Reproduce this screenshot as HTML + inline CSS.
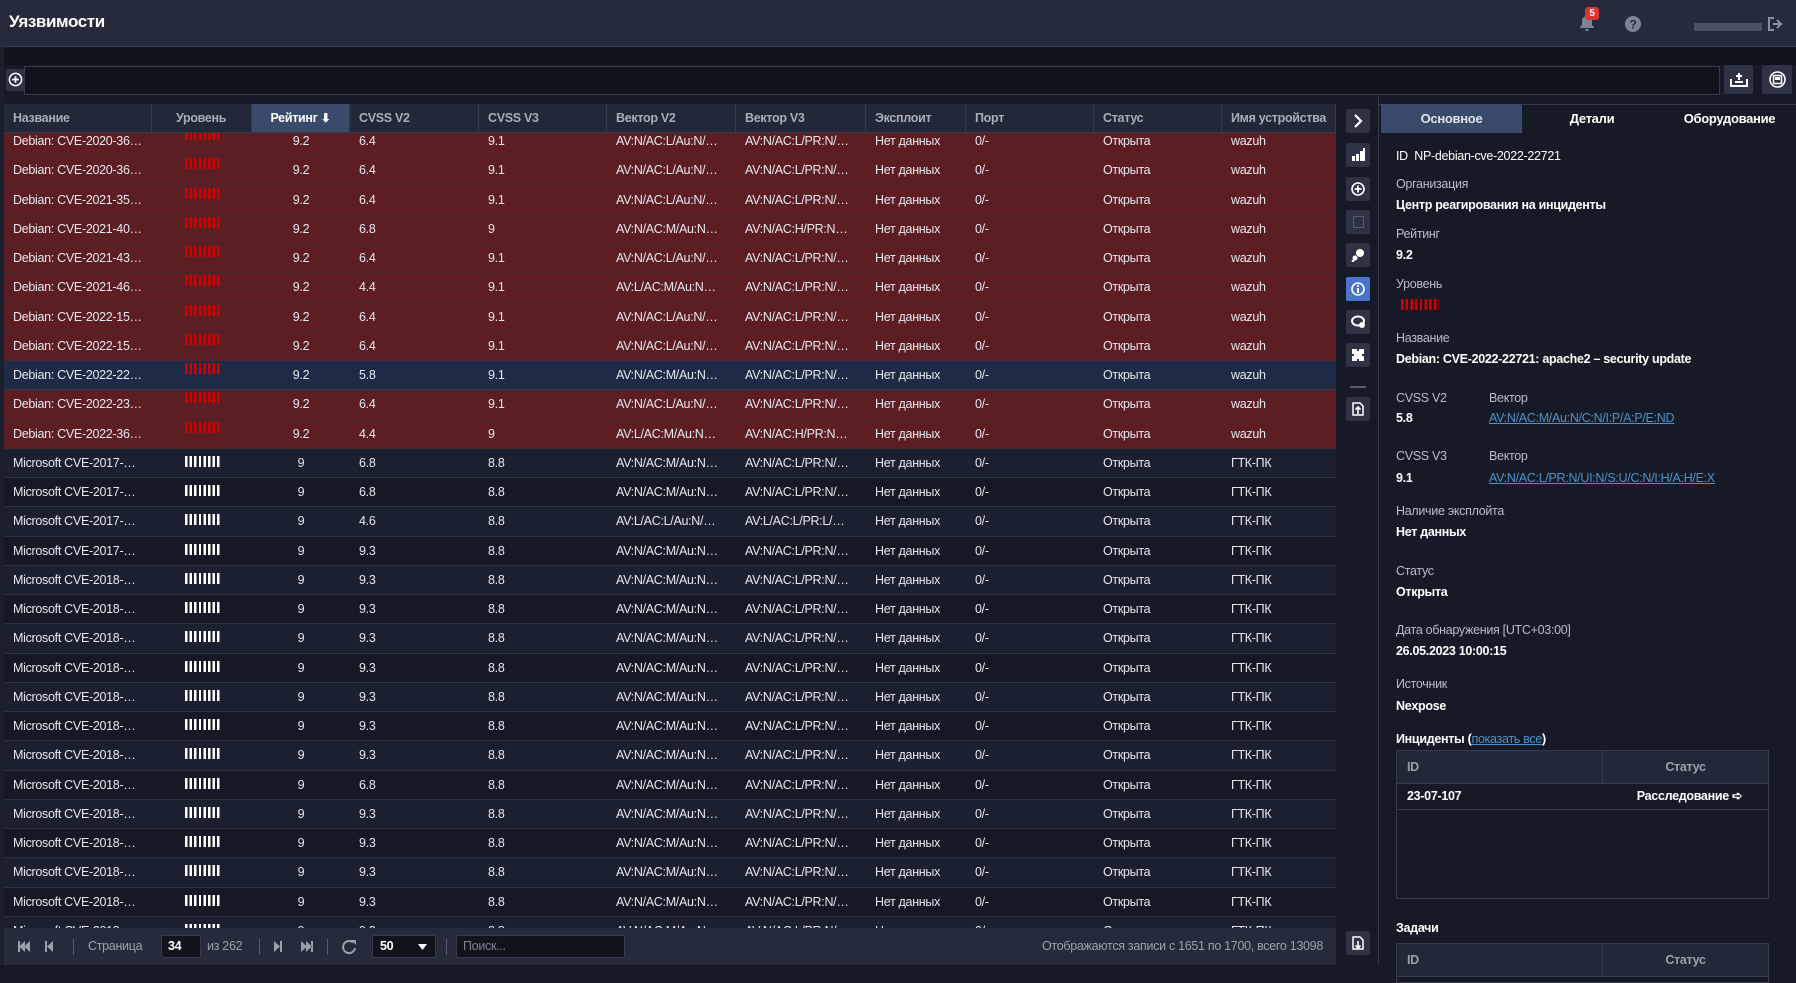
<!DOCTYPE html>
<html><head><meta charset="utf-8"><style>
*{box-sizing:border-box;margin:0;padding:0}
body{width:1796px;height:965px;overflow:hidden;background:#161a26;font-family:"Liberation Sans",sans-serif;color:#e6e8ee;position:relative;font-size:12.5px;letter-spacing:-0.3px}
.abs{position:absolute}
#top{left:0;top:0;width:1796px;height:47px;background:#262b3b;border-bottom:1px solid #333a4c}
#top .t{left:9px;top:12px;font-size:17px;font-weight:bold;color:#fff;letter-spacing:-0.4px}
#strip{left:0;top:0;width:4px;height:965px;background:#1b1f2b}
#band{left:4px;top:48px;width:1792px;height:17px;background:#10131c}
#tb{left:4px;top:65px;width:1792px;height:31px;background:#161a26}
.inp{border:1px solid #343b4d;background:#11141d}
.btn{background:#2d3344;border-radius:2px}
#grid{left:4px;top:104px;width:1332px;height:824px;overflow:hidden;background:#161a26}
.hdr{position:absolute;left:0;top:0;height:29px;width:1332px;background:#232838;display:flex;border-bottom:1px solid #333a4c;z-index:2}
.hdr div{border-right:1px solid #333a4c;color:#a8adba;font-weight:bold;line-height:29px;padding-left:9px;white-space:nowrap;overflow:hidden}
.rows{position:absolute;left:0;top:23px;width:1332px}
.r{height:29.25px;display:flex;line-height:28px;border-bottom:1px solid #2c3244;white-space:nowrap}
.r div{padding-left:9px;overflow:hidden}
.red{background:#5c1e23;border-bottom-color:#47262e}
.sel{background:#1e2a46;border-bottom-color:#2c3550}
.d1{background:#1b2030}
.d2{background:#151925}
.c1{width:148px}.c2{width:100px}.c3{width:98px;text-align:center;padding-left:0!important}.c4{width:129px}.c5{width:128px}.c6{width:129px}.c7{width:130px}.c8{width:100px}.c9{width:128px}.c10{width:128px}.c11{width:114px}
.bars{display:inline-block;width:37px;height:11px;margin-left:24px;vertical-align:0px;background:repeating-linear-gradient(90deg,#fff 0 2.4px,transparent 2.4px 4.6px)}
.red .bars,.sel .bars{background:repeating-linear-gradient(90deg,#d20000 0 2.4px,transparent 2.4px 4.6px);vertical-align:5px}
#pager{left:4px;top:928px;width:1332px;height:37px;background:#262b3b;color:#9ba0ad;font-size:12.5px}
#pager span{position:absolute;top:11px}
.sep{position:absolute;top:11px;width:1px;height:16px;background:#555c6e}
#side{left:1336px;top:96px;width:42px;height:869px;background:#161a26}
.sb{position:absolute;left:10px;width:24px;height:24px;background:#2d3344;border-radius:2px}
#panel{left:1378px;top:96px;width:418px;height:869px;background:#161a26;border-left:1px solid #333a4c}
.tab{position:absolute;top:8px;height:29px;line-height:29px;text-align:center;font-weight:bold;color:#fff;font-size:13px}
.lb{position:absolute;left:17px;color:#b9bdc8;font-size:12.5px}
.vl{position:absolute;left:17px;color:#fff;font-weight:bold;font-size:12.5px}
a{color:#4b93c9;text-decoration:underline}
.it{position:absolute;left:17px;width:373px;border:1px solid #343b4d;background:#161a26}
.ith{height:33px;background:#232838;border-bottom:1px solid #343b4d;display:flex;color:#9ba0ad;font-weight:bold}
</style></head><body>
<div id="strip" class="abs"></div>
<div id="top" class="abs"><div class="t abs">Уязвимости</div>
<svg class="abs" style="left:1578px;top:14px" width="18" height="18" viewBox="0 0 18 18"><path d="M9 2c-3 0-5 2-5 5v4l-2 2v1h14v-1l-2-2V7c0-3-2-5-5-5zM7 15a2 2 0 004 0z" fill="#7d8393"/></svg>
<div class="abs" style="left:1585px;top:7px;width:14px;height:13px;background:#e03131;border-radius:3px;color:#fff;font-size:10px;font-weight:bold;text-align:center;line-height:13px">5</div>
<svg class="abs" style="left:1625px;top:16px" width="16" height="16" viewBox="0 0 16 16"><circle cx="8" cy="8" r="8" fill="#7d8393"/><text x="8" y="12.5" text-anchor="middle" font-size="12" font-weight="bold" fill="#262b3b" font-family="Liberation Sans">?</text></svg>
<div class="abs" style="left:1694px;top:23px;width:68px;height:8px;background:#4a5061"></div>
<svg class="abs" style="left:1767px;top:16px" width="17" height="16" viewBox="0 0 17 16"><path d="M7 2H2v12h5" stroke="#8a90a0" stroke-width="2" fill="none"/><path d="M6 8h7M10 4l4 4-4 4" stroke="#8a90a0" stroke-width="2" fill="none"/></svg>
</div>
<div id="band" class="abs"></div>
<div id="tb" class="abs">
<div class="abs btn" style="left:2px;top:4px;width:18px;height:22px"></div>
<svg class="abs" style="left:4px;top:7px" width="15" height="15" viewBox="0 0 16 16"><circle cx="8" cy="8" r="6.5" stroke="#fff" stroke-width="1.6" fill="none"/><path d="M8 4.5v7M4.5 8h7" stroke="#fff" stroke-width="1.8"/></svg>
<div class="abs inp" style="left:20px;top:1px;width:1696px;height:29px"></div>
<div class="abs btn" style="left:1720px;top:0;width:29px;height:29px"></div>
<svg class="abs" style="left:1726px;top:6px" width="18" height="16" viewBox="0 0 18 16"><path d="M1 8v7h16V8" stroke="#fff" stroke-width="2" fill="none"/><path d="M5 11h8M9 2v7M6 5h6" stroke="#fff" stroke-width="2"/></svg>
<div class="abs btn" style="left:1758px;top:0;width:30px;height:29px"></div>
<svg class="abs" style="left:1765px;top:6px" width="17" height="17" viewBox="0 0 17 17"><circle cx="8.5" cy="8.5" r="7.5" stroke="#fff" stroke-width="1.6" fill="none"/><rect x="4.5" y="4.5" width="8" height="8" rx="1" stroke="#fff" stroke-width="1.6" fill="none"/><path d="M6 6h5v3H6z" fill="#fff"/></svg>
</div>

<div id="grid" class="abs">
<div class="hdr"><div class="c1">Название</div><div class="c2" style="padding-left:24px">Уровень</div><div class="c3" style="background:#3a4a6b;color:#fff">Рейтинг <span style="font-size:12px">&#x2B07;</span></div><div class="c4">CVSS V2</div><div class="c5">CVSS V3</div><div class="c6">Вектор V2</div><div class="c7">Вектор V3</div><div class="c8">Эксплоит</div><div class="c9">Порт</div><div class="c10">Статус</div><div class="c11">Имя устройства</div></div>
<div class="rows">
<div class="r red"><div class="c1">Debian: CVE-2020-36…</div><div class="c2"><span class="bars"></span></div><div class="c3">9.2</div><div class="c4">6.4</div><div class="c5">9.1</div><div class="c6">AV:N/AC:L/Au:N/…</div><div class="c7">AV:N/AC:L/PR:N/…</div><div class="c8">Нет данных</div><div class="c9">0/-</div><div class="c10">Открыта</div><div class="c11">wazuh</div></div>
<div class="r red"><div class="c1">Debian: CVE-2020-36…</div><div class="c2"><span class="bars"></span></div><div class="c3">9.2</div><div class="c4">6.4</div><div class="c5">9.1</div><div class="c6">AV:N/AC:L/Au:N/…</div><div class="c7">AV:N/AC:L/PR:N/…</div><div class="c8">Нет данных</div><div class="c9">0/-</div><div class="c10">Открыта</div><div class="c11">wazuh</div></div>
<div class="r red"><div class="c1">Debian: CVE-2021-35…</div><div class="c2"><span class="bars"></span></div><div class="c3">9.2</div><div class="c4">6.4</div><div class="c5">9.1</div><div class="c6">AV:N/AC:L/Au:N/…</div><div class="c7">AV:N/AC:L/PR:N/…</div><div class="c8">Нет данных</div><div class="c9">0/-</div><div class="c10">Открыта</div><div class="c11">wazuh</div></div>
<div class="r red"><div class="c1">Debian: CVE-2021-40…</div><div class="c2"><span class="bars"></span></div><div class="c3">9.2</div><div class="c4">6.8</div><div class="c5">9</div><div class="c6">AV:N/AC:M/Au:N…</div><div class="c7">AV:N/AC:H/PR:N…</div><div class="c8">Нет данных</div><div class="c9">0/-</div><div class="c10">Открыта</div><div class="c11">wazuh</div></div>
<div class="r red"><div class="c1">Debian: CVE-2021-43…</div><div class="c2"><span class="bars"></span></div><div class="c3">9.2</div><div class="c4">6.4</div><div class="c5">9.1</div><div class="c6">AV:N/AC:L/Au:N/…</div><div class="c7">AV:N/AC:L/PR:N/…</div><div class="c8">Нет данных</div><div class="c9">0/-</div><div class="c10">Открыта</div><div class="c11">wazuh</div></div>
<div class="r red"><div class="c1">Debian: CVE-2021-46…</div><div class="c2"><span class="bars"></span></div><div class="c3">9.2</div><div class="c4">4.4</div><div class="c5">9.1</div><div class="c6">AV:L/AC:M/Au:N…</div><div class="c7">AV:N/AC:L/PR:N/…</div><div class="c8">Нет данных</div><div class="c9">0/-</div><div class="c10">Открыта</div><div class="c11">wazuh</div></div>
<div class="r red"><div class="c1">Debian: CVE-2022-15…</div><div class="c2"><span class="bars"></span></div><div class="c3">9.2</div><div class="c4">6.4</div><div class="c5">9.1</div><div class="c6">AV:N/AC:L/Au:N/…</div><div class="c7">AV:N/AC:L/PR:N/…</div><div class="c8">Нет данных</div><div class="c9">0/-</div><div class="c10">Открыта</div><div class="c11">wazuh</div></div>
<div class="r red"><div class="c1">Debian: CVE-2022-15…</div><div class="c2"><span class="bars"></span></div><div class="c3">9.2</div><div class="c4">6.4</div><div class="c5">9.1</div><div class="c6">AV:N/AC:L/Au:N/…</div><div class="c7">AV:N/AC:L/PR:N/…</div><div class="c8">Нет данных</div><div class="c9">0/-</div><div class="c10">Открыта</div><div class="c11">wazuh</div></div>
<div class="r sel"><div class="c1">Debian: CVE-2022-22…</div><div class="c2"><span class="bars"></span></div><div class="c3">9.2</div><div class="c4">5.8</div><div class="c5">9.1</div><div class="c6">AV:N/AC:M/Au:N…</div><div class="c7">AV:N/AC:L/PR:N/…</div><div class="c8">Нет данных</div><div class="c9">0/-</div><div class="c10">Открыта</div><div class="c11">wazuh</div></div>
<div class="r red"><div class="c1">Debian: CVE-2022-23…</div><div class="c2"><span class="bars"></span></div><div class="c3">9.2</div><div class="c4">6.4</div><div class="c5">9.1</div><div class="c6">AV:N/AC:L/Au:N/…</div><div class="c7">AV:N/AC:L/PR:N/…</div><div class="c8">Нет данных</div><div class="c9">0/-</div><div class="c10">Открыта</div><div class="c11">wazuh</div></div>
<div class="r red"><div class="c1">Debian: CVE-2022-36…</div><div class="c2"><span class="bars"></span></div><div class="c3">9.2</div><div class="c4">4.4</div><div class="c5">9</div><div class="c6">AV:L/AC:M/Au:N…</div><div class="c7">AV:N/AC:H/PR:N…</div><div class="c8">Нет данных</div><div class="c9">0/-</div><div class="c10">Открыта</div><div class="c11">wazuh</div></div>
<div class="r d1"><div class="c1">Microsoft CVE-2017-…</div><div class="c2"><span class="bars"></span></div><div class="c3">9</div><div class="c4">6.8</div><div class="c5">8.8</div><div class="c6">AV:N/AC:M/Au:N…</div><div class="c7">AV:N/AC:L/PR:N/…</div><div class="c8">Нет данных</div><div class="c9">0/-</div><div class="c10">Открыта</div><div class="c11">ГТК-ПК</div></div>
<div class="r d2"><div class="c1">Microsoft CVE-2017-…</div><div class="c2"><span class="bars"></span></div><div class="c3">9</div><div class="c4">6.8</div><div class="c5">8.8</div><div class="c6">AV:N/AC:M/Au:N…</div><div class="c7">AV:N/AC:L/PR:N/…</div><div class="c8">Нет данных</div><div class="c9">0/-</div><div class="c10">Открыта</div><div class="c11">ГТК-ПК</div></div>
<div class="r d1"><div class="c1">Microsoft CVE-2017-…</div><div class="c2"><span class="bars"></span></div><div class="c3">9</div><div class="c4">4.6</div><div class="c5">8.8</div><div class="c6">AV:L/AC:L/Au:N/…</div><div class="c7">AV:L/AC:L/PR:L/…</div><div class="c8">Нет данных</div><div class="c9">0/-</div><div class="c10">Открыта</div><div class="c11">ГТК-ПК</div></div>
<div class="r d2"><div class="c1">Microsoft CVE-2017-…</div><div class="c2"><span class="bars"></span></div><div class="c3">9</div><div class="c4">9.3</div><div class="c5">8.8</div><div class="c6">AV:N/AC:M/Au:N…</div><div class="c7">AV:N/AC:L/PR:N/…</div><div class="c8">Нет данных</div><div class="c9">0/-</div><div class="c10">Открыта</div><div class="c11">ГТК-ПК</div></div>
<div class="r d1"><div class="c1">Microsoft CVE-2018-…</div><div class="c2"><span class="bars"></span></div><div class="c3">9</div><div class="c4">9.3</div><div class="c5">8.8</div><div class="c6">AV:N/AC:M/Au:N…</div><div class="c7">AV:N/AC:L/PR:N/…</div><div class="c8">Нет данных</div><div class="c9">0/-</div><div class="c10">Открыта</div><div class="c11">ГТК-ПК</div></div>
<div class="r d2"><div class="c1">Microsoft CVE-2018-…</div><div class="c2"><span class="bars"></span></div><div class="c3">9</div><div class="c4">9.3</div><div class="c5">8.8</div><div class="c6">AV:N/AC:M/Au:N…</div><div class="c7">AV:N/AC:L/PR:N/…</div><div class="c8">Нет данных</div><div class="c9">0/-</div><div class="c10">Открыта</div><div class="c11">ГТК-ПК</div></div>
<div class="r d1"><div class="c1">Microsoft CVE-2018-…</div><div class="c2"><span class="bars"></span></div><div class="c3">9</div><div class="c4">9.3</div><div class="c5">8.8</div><div class="c6">AV:N/AC:M/Au:N…</div><div class="c7">AV:N/AC:L/PR:N/…</div><div class="c8">Нет данных</div><div class="c9">0/-</div><div class="c10">Открыта</div><div class="c11">ГТК-ПК</div></div>
<div class="r d2"><div class="c1">Microsoft CVE-2018-…</div><div class="c2"><span class="bars"></span></div><div class="c3">9</div><div class="c4">9.3</div><div class="c5">8.8</div><div class="c6">AV:N/AC:M/Au:N…</div><div class="c7">AV:N/AC:L/PR:N/…</div><div class="c8">Нет данных</div><div class="c9">0/-</div><div class="c10">Открыта</div><div class="c11">ГТК-ПК</div></div>
<div class="r d1"><div class="c1">Microsoft CVE-2018-…</div><div class="c2"><span class="bars"></span></div><div class="c3">9</div><div class="c4">9.3</div><div class="c5">8.8</div><div class="c6">AV:N/AC:M/Au:N…</div><div class="c7">AV:N/AC:L/PR:N/…</div><div class="c8">Нет данных</div><div class="c9">0/-</div><div class="c10">Открыта</div><div class="c11">ГТК-ПК</div></div>
<div class="r d2"><div class="c1">Microsoft CVE-2018-…</div><div class="c2"><span class="bars"></span></div><div class="c3">9</div><div class="c4">9.3</div><div class="c5">8.8</div><div class="c6">AV:N/AC:M/Au:N…</div><div class="c7">AV:N/AC:L/PR:N/…</div><div class="c8">Нет данных</div><div class="c9">0/-</div><div class="c10">Открыта</div><div class="c11">ГТК-ПК</div></div>
<div class="r d1"><div class="c1">Microsoft CVE-2018-…</div><div class="c2"><span class="bars"></span></div><div class="c3">9</div><div class="c4">9.3</div><div class="c5">8.8</div><div class="c6">AV:N/AC:M/Au:N…</div><div class="c7">AV:N/AC:L/PR:N/…</div><div class="c8">Нет данных</div><div class="c9">0/-</div><div class="c10">Открыта</div><div class="c11">ГТК-ПК</div></div>
<div class="r d2"><div class="c1">Microsoft CVE-2018-…</div><div class="c2"><span class="bars"></span></div><div class="c3">9</div><div class="c4">6.8</div><div class="c5">8.8</div><div class="c6">AV:N/AC:M/Au:N…</div><div class="c7">AV:N/AC:L/PR:N/…</div><div class="c8">Нет данных</div><div class="c9">0/-</div><div class="c10">Открыта</div><div class="c11">ГТК-ПК</div></div>
<div class="r d1"><div class="c1">Microsoft CVE-2018-…</div><div class="c2"><span class="bars"></span></div><div class="c3">9</div><div class="c4">9.3</div><div class="c5">8.8</div><div class="c6">AV:N/AC:M/Au:N…</div><div class="c7">AV:N/AC:L/PR:N/…</div><div class="c8">Нет данных</div><div class="c9">0/-</div><div class="c10">Открыта</div><div class="c11">ГТК-ПК</div></div>
<div class="r d2"><div class="c1">Microsoft CVE-2018-…</div><div class="c2"><span class="bars"></span></div><div class="c3">9</div><div class="c4">9.3</div><div class="c5">8.8</div><div class="c6">AV:N/AC:M/Au:N…</div><div class="c7">AV:N/AC:L/PR:N/…</div><div class="c8">Нет данных</div><div class="c9">0/-</div><div class="c10">Открыта</div><div class="c11">ГТК-ПК</div></div>
<div class="r d1"><div class="c1">Microsoft CVE-2018-…</div><div class="c2"><span class="bars"></span></div><div class="c3">9</div><div class="c4">9.3</div><div class="c5">8.8</div><div class="c6">AV:N/AC:M/Au:N…</div><div class="c7">AV:N/AC:L/PR:N/…</div><div class="c8">Нет данных</div><div class="c9">0/-</div><div class="c10">Открыта</div><div class="c11">ГТК-ПК</div></div>
<div class="r d2"><div class="c1">Microsoft CVE-2018-…</div><div class="c2"><span class="bars"></span></div><div class="c3">9</div><div class="c4">9.3</div><div class="c5">8.8</div><div class="c6">AV:N/AC:M/Au:N…</div><div class="c7">AV:N/AC:L/PR:N/…</div><div class="c8">Нет данных</div><div class="c9">0/-</div><div class="c10">Открыта</div><div class="c11">ГТК-ПК</div></div>
<div class="r d1"><div class="c1">Microsoft CVE-2018-…</div><div class="c2"><span class="bars"></span></div><div class="c3">9</div><div class="c4">9.3</div><div class="c5">8.8</div><div class="c6">AV:N/AC:M/Au:N…</div><div class="c7">AV:N/AC:L/PR:N/…</div><div class="c8">Нет данных</div><div class="c9">0/-</div><div class="c10">Открыта</div><div class="c11">ГТК-ПК</div></div>
</div></div>

<div id="pager" class="abs">
<svg class="abs" style="left:13px;top:13px" width="13" height="11" viewBox="0 0 13 11"><path d="M1 0h2v11H1zM13 0v11L7 5.5zM8 0v11L2 5.5z" fill="#9ba0ad"/></svg>
<svg class="abs" style="left:40px;top:13px" width="9" height="11" viewBox="0 0 9 11"><path d="M1 0h2v11H1zM9 0v11L3 5.5z" fill="#9ba0ad"/></svg>
<div class="sep" style="left:69px"></div>
<span style="left:84px">Страница</span>
<div class="abs inp" style="left:157px;top:7px;width:40px;height:23px;background:#11141d;border-radius:2px"></div>
<span style="left:164px;color:#fff;font-weight:bold">34</span>
<span style="left:203px">из 262</span>
<div class="sep" style="left:255px"></div>
<svg class="abs" style="left:270px;top:13px" width="9" height="11" viewBox="0 0 9 11"><path d="M6 0h2v11H6zM0 0v11l6-5.5z" fill="#9ba0ad"/></svg>
<svg class="abs" style="left:297px;top:13px" width="13" height="11" viewBox="0 0 13 11"><path d="M10 0h2v11h-2zM0 0v11l6-5.5zM5 0v11l6-5.5z" fill="#9ba0ad"/></svg>
<div class="sep" style="left:323px"></div>
<svg class="abs" style="left:338px;top:10px" width="16" height="17" viewBox="0 0 16 17"><path d="M13 10a6 6 0 11-2-5.5" stroke="#9ba0ad" stroke-width="2" fill="none"/><path d="M9 2h5v5z" fill="#9ba0ad"/></svg>
<div class="abs inp" style="left:368px;top:7px;width:64px;height:23px;background:#11141d;border-radius:2px"></div>
<span style="left:376px;color:#fff;font-weight:bold">50</span>
<svg class="abs" style="left:414px;top:16px" width="9" height="6"><path d="M0 0h9L4.5 6z" fill="#fff"/></svg>
<div class="sep" style="left:442px"></div>
<div class="abs inp" style="left:452px;top:7px;width:169px;height:23px;background:#11141d;border-radius:2px"></div>
<span style="left:459px;color:#7d8393">Поиск...</span>
<span style="left:1038px">Отображаются записи с 1651 по 1700, всего 13098</span>
</div>

<div id="side" class="abs">
<div class="sb" style="top:13px"></div><svg class="abs" style="left:17px;top:18px" width="10" height="14"><path d="M2 1l6 6-6 6" stroke="#fff" stroke-width="2.2" fill="none"/></svg>
<div class="sb" style="top:47px"></div><svg class="abs" style="left:16px;top:52px" width="13" height="13"><path d="M0 8h3v5H0zM4 6h3v7H4zM8 3h3v10H8zM11 0h2v13h-2z" fill="#fff"/></svg>
<div class="sb" style="top:81px"></div><svg class="abs" style="left:15px;top:86px" width="14" height="14" viewBox="0 0 14 14"><circle cx="7" cy="7" r="6" stroke="#fff" stroke-width="1.6" fill="none"/><path d="M7 3.5v7M3.5 7h7" stroke="#fff" stroke-width="1.8"/></svg>
<div class="sb" style="top:114px"></div><div class="abs" style="left:17px;top:120px;width:11px;height:12px;border:1px solid #555c6e"></div>
<div class="sb" style="top:147px"></div><svg class="abs" style="left:15px;top:152px" width="14" height="14"><circle cx="9" cy="5" r="4" fill="#fff"/><circle cx="4" cy="10" r="2.5" fill="#fff"/><circle cx="2" cy="13" r="1.3" fill="#fff"/></svg>
<div class="sb" style="top:181px;background:#4a74c9"></div><svg class="abs" style="left:15px;top:186px" width="14" height="14" viewBox="0 0 14 14"><circle cx="7" cy="7" r="6" stroke="#fff" stroke-width="1.6" fill="none"/><path d="M7 6v5" stroke="#fff" stroke-width="2"/><circle cx="7" cy="3.8" r="1.1" fill="#fff"/></svg>
<div class="sb" style="top:214px"></div><svg class="abs" style="left:15px;top:219px" width="15" height="14"><ellipse cx="7" cy="6" rx="6" ry="4.5" stroke="#fff" stroke-width="2" fill="none"/><circle cx="11" cy="10" r="3" fill="#fff"/></svg>
<div class="sb" style="top:247px"></div><svg class="abs" style="left:15px;top:252px" width="14" height="14"><path d="M1 1h5v2h2V1h5v5h-2v2h2v5H8v-2H6v2H1V8h2V6H1z" fill="#fff"/></svg>
<div class="abs" style="left:14px;top:290px;width:16px;height:2px;background:#555c6e"></div>
<div class="sb" style="top:301px"></div><svg class="abs" style="left:16px;top:306px" width="12" height="14"><path d="M1 1h7l3 3v9H1z" stroke="#fff" stroke-width="1.5" fill="none"/><path d="M6 12V5M3.5 7.5L6 5l2.5 2.5" stroke="#fff" stroke-width="1.6" fill="none"/></svg>
<div class="sb" style="top:835px"></div><svg class="abs" style="left:16px;top:840px" width="12" height="14"><path d="M1 1h7l3 3v9H1z" stroke="#fff" stroke-width="1.5" fill="none"/><path d="M6 5v7M3.5 9.5L6 12l2.5-2.5" stroke="#fff" stroke-width="1.6" fill="none"/></svg>
</div>

<div id="panel" class="abs">
<div class="abs" style="left:0;top:8px;width:418px;height:29px;border-top:1px solid #333a4c"></div>
<div class="tab" style="left:2px;width:141px;background:#3a4a6b;color:#dfe3ea">Основное</div>
<div class="tab" style="left:143px;width:140px">Детали</div>
<div class="tab" style="left:283px;width:135px">Оборудование</div>
<div class="vl" style="top:53px;font-weight:normal">ID&nbsp; NP-debian-cve-2022-22721</div>
<div class="lb" style="top:81px">Организация</div>
<div class="vl" style="top:102px">Центр реагирования на инциденты</div>
<div class="lb" style="top:131px">Рейтинг</div>
<div class="vl" style="top:152px">9.2</div>
<div class="lb" style="top:181px">Уровень</div>
<div class="abs" style="left:22px;top:203px;width:38px;height:11px;background:repeating-linear-gradient(90deg,#d20000 0 2.4px,transparent 2.4px 4.7px)"></div>
<div class="lb" style="top:235px">Название</div>
<div class="vl" style="top:256px">Debian: CVE-2022-22721: apache2 – security update</div>
<div class="lb" style="top:295px">CVSS V2</div><div class="lb" style="top:295px;left:110px">Вектор</div>
<div class="vl" style="top:315px">5.8</div><div class="abs" style="top:315px;left:110px"><a>AV:N/AC:M/Au:N/C:N/I:P/A:P/E:ND</a></div>
<div class="lb" style="top:353px">CVSS V3</div><div class="lb" style="top:353px;left:110px">Вектор</div>
<div class="vl" style="top:375px">9.1</div><div class="abs" style="top:375px;left:110px"><a>AV:N/AC:L/PR:N/UI:N/S:U/C:N/I:H/A:H/E:X</a></div>
<div class="lb" style="top:408px">Наличие эксплойта</div>
<div class="vl" style="top:429px">Нет данных</div>
<div class="lb" style="top:468px">Статус</div>
<div class="vl" style="top:489px">Открыта</div>
<div class="lb" style="top:527px">Дата обнаружения [UTC+03:00]</div>
<div class="vl" style="top:548px">26.05.2023 10:00:15</div>
<div class="lb" style="top:581px">Источник</div>
<div class="vl" style="top:603px">Nexpose</div>
<div class="vl" style="top:636px">Инциденты (<a style="font-weight:normal">показать все</a>)</div>
<div class="it" style="top:654px;height:149px">
<div class="ith"><div style="width:206px;border-right:1px solid #343b4d;padding:9px 10px">ID</div><div style="flex:1;text-align:center;padding-top:9px">Статус</div></div>
<div style="height:26px;border-bottom:1px solid #343b4d;display:flex;color:#fff;font-weight:bold;line-height:25px"><div style="width:206px;padding-left:10px">23-07-107</div><div style="flex:1;text-align:center;padding-left:8px">Расследование ➪</div></div>
</div>
<div class="vl" style="top:825px">Задачи</div>
<div class="it" style="top:847px;height:40px">
<div class="ith"><div style="width:206px;border-right:1px solid #343b4d;padding:9px 10px">ID</div><div style="flex:1;text-align:center;padding-top:9px">Статус</div></div>
</div>
</div>
</body></html>
